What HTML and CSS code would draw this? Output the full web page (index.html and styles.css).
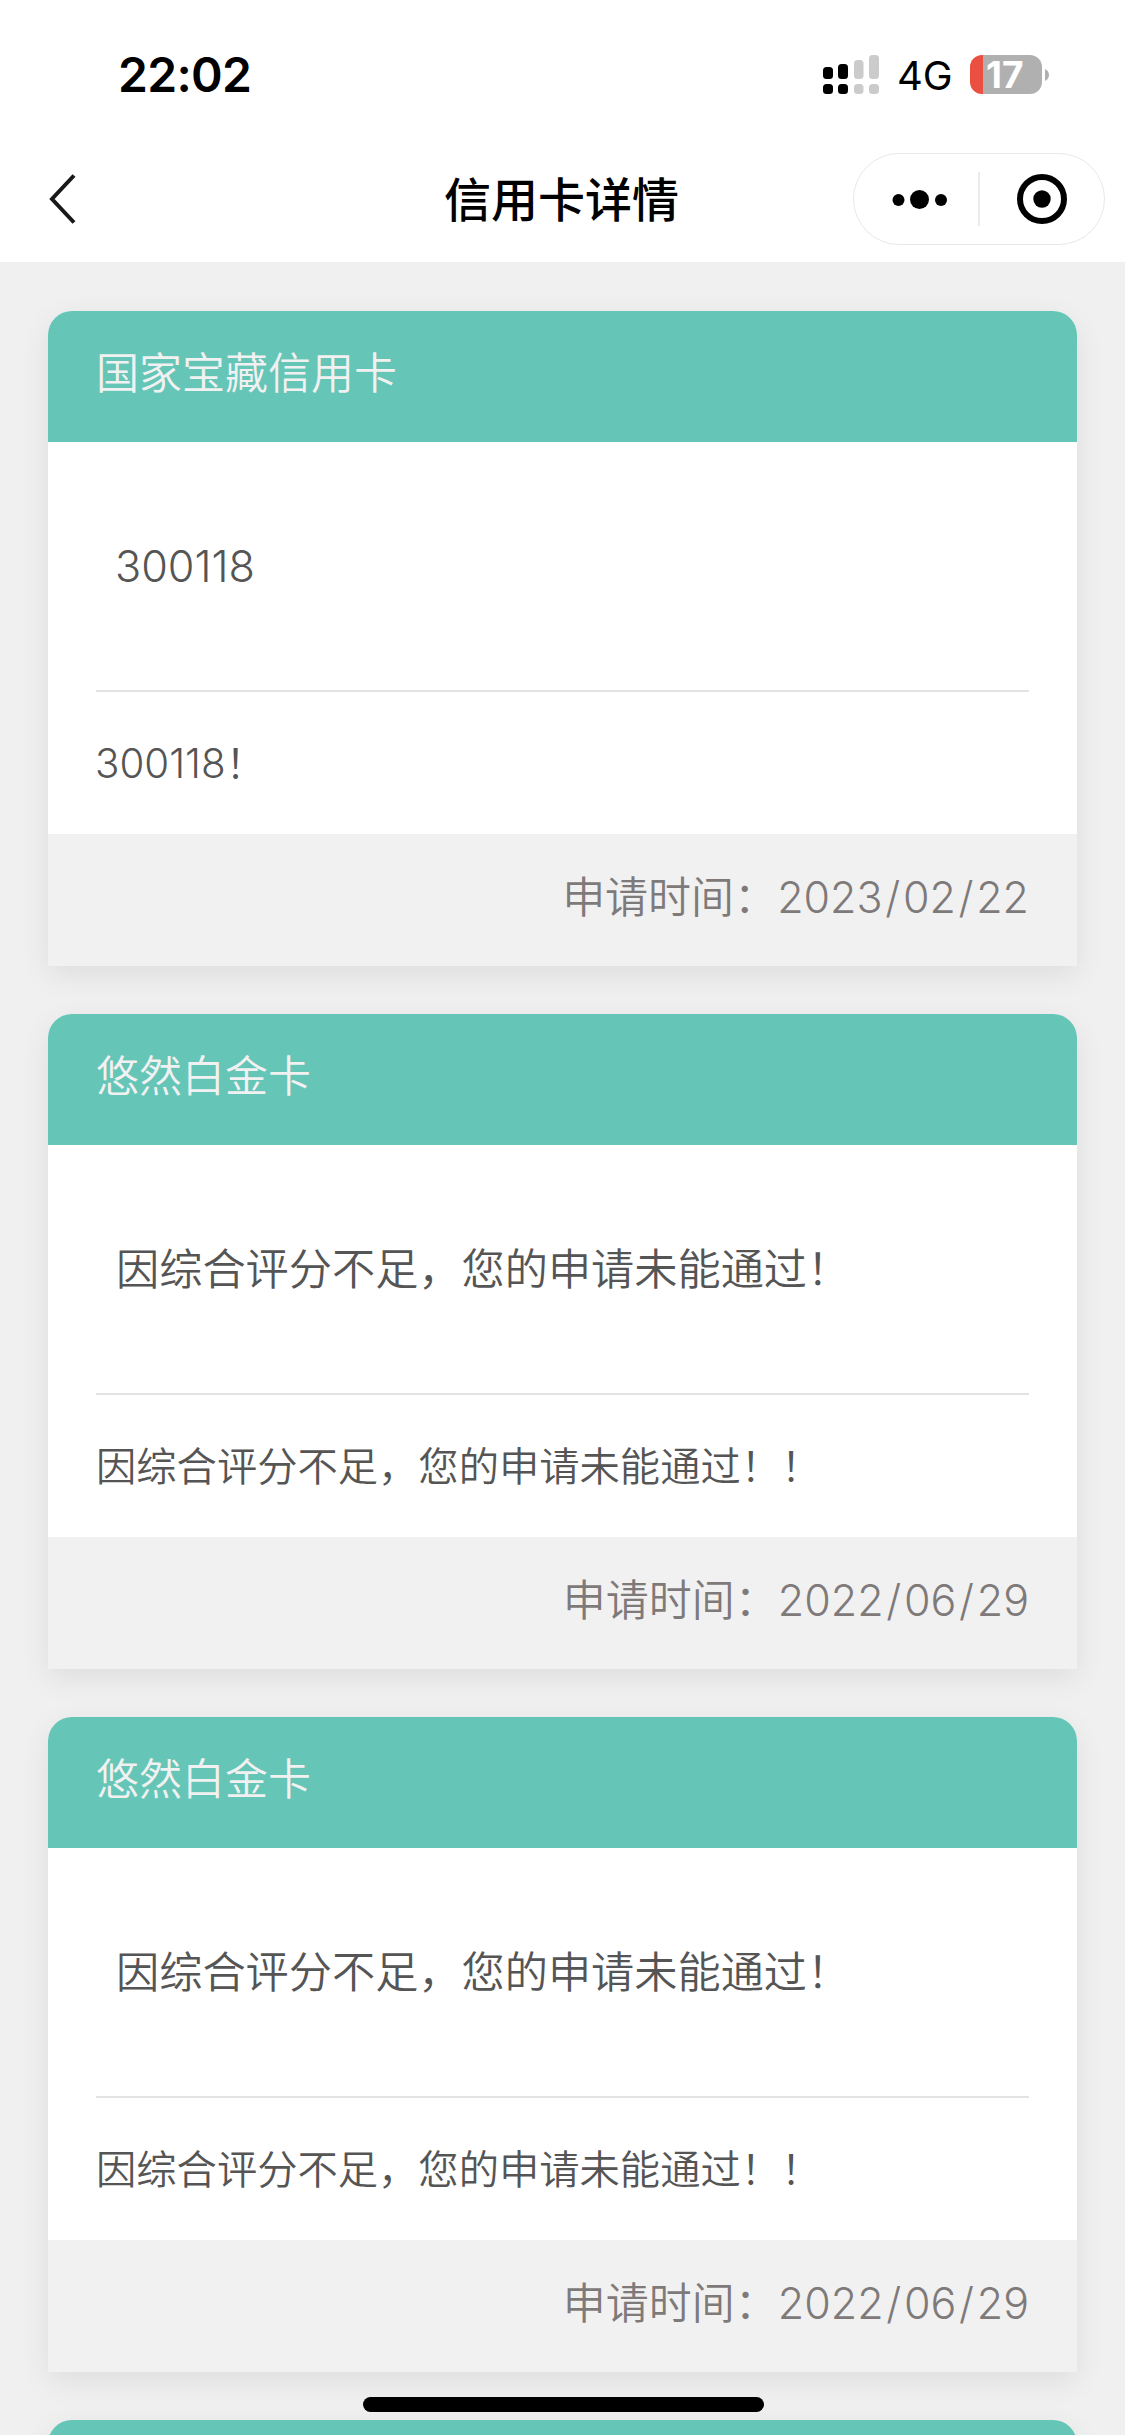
FILE: index.html
```html
<!DOCTYPE html>
<html lang="zh-CN">
<head>
<meta charset="utf-8">
<title>信用卡详情</title>
<link rel="stylesheet" href="styles.css">
</head>
<body>
<header class="top">
  <div class="status">
    <span class="time">22:02</span>
    <div class="status-right">
      <svg class="signal" width="56" height="39" viewBox="0 0 56 39">
        <g fill="#000"><rect x="0" y="12" width="10" height="12" rx="3.5"/><rect x="15" y="9" width="10" height="15" rx="3.5"/><rect x="0" y="29" width="10" height="10" rx="3.5"/><rect x="15" y="29" width="10" height="10" rx="3.5"/></g>
        <g fill="#cbcbcb"><rect x="31" y="5" width="9.5" height="19" rx="3.5"/><rect x="46" y="0" width="10" height="24" rx="3.5"/><rect x="31" y="29" width="9.5" height="10" rx="3.5"/><rect x="46" y="29" width="10" height="10" rx="3.5"/></g>
      </svg>
      <span class="network">4G</span>
      <div class="battery"><span class="level">17</span></div>
      <svg class="battery-tip" width="4" height="12" viewBox="0 0 4 12"><path d="M0 0Q4 2 4 6T0 12Z" fill="#b0b0b0"/></svg>
    </div>
  </div>
  <div class="nav">
    <svg class="back" width="30" height="52" viewBox="0 0 30 52"><path d="M27 2.5 5 26 27 49.500" fill="none" stroke="#191919" stroke-width="4"/></svg>
    <h1 class="title">信用卡详情</h1>
    <div class="capsule">
      <svg width="250" height="90" viewBox="0 0 250 90">
        <circle cx="44.500" cy="46" r="6"/><circle cx="65.500" cy="45.500" r="9.500"/><circle cx="87" cy="46" r="6"/>
        <path d="M125 18V72" stroke="#d8d8d8" stroke-width="1"/>
        <circle cx="188" cy="45" r="22" fill="none" stroke="#000" stroke-width="6"/><circle cx="188" cy="45" r="8.700"/>
      </svg>
    </div>
  </div>
</header>
<main class="list">
  <section class="card">
    <h2 class="card-name">国家宝藏信用卡</h2>
    <div class="card-body">
      <p class="result"><span class="num">300118</span></p>
      <p class="detail"><span class="num">300118</span>！</p>
    </div>
    <p class="card-foot">申请时间：<span class="date">2023<i>/</i>02<i>/</i>22</span></p>
  </section>
  <section class="card">
    <h2 class="card-name">悠然白金卡</h2>
    <div class="card-body">
      <p class="result">因综合评分不足，您的申请未能通过！</p>
      <p class="detail">因综合评分不足，您的申请未能通过！！</p>
    </div>
    <p class="card-foot">申请时间：<span class="date">2022<i>/</i>06<i>/</i>29</span></p>
  </section>
  <section class="card">
    <h2 class="card-name">悠然白金卡</h2>
    <div class="card-body">
      <p class="result">因综合评分不足，您的申请未能通过！</p>
      <p class="detail">因综合评分不足，您的申请未能通过！！</p>
    </div>
    <p class="card-foot">申请时间：<span class="date">2022<i>/</i>06<i>/</i>29</span></p>
  </section>
  <section class="card card-peek"></section>
</main>
<div class="home-indicator"></div>
</body>
</html>
```
FILE: styles.css
```css
* { box-sizing: border-box; margin: 0; padding: 0; }
body {
  width: 1125px;
  height: 2435px;
  overflow: hidden;
  background: #f0f0f0;
  font-family: Inter, "Noto Sans CJK SC", sans-serif;
  font-weight: 350;
  color: #555;
}
svg { display: block; flex: none; }
.top { height: 262px; background: #fff; color: #000; }
.status {
  height: 149px;
  padding: 0 76px 0 118px;
  display: flex;
  align-items: center;
  justify-content: space-between;
}
.time { font-size: 48px; font-weight: 600; letter-spacing: -0.7px; }
.status-right { display: flex; align-items: center; }
.network { width: 91px; padding: 2px 0 0 18px; font-size: 40px; font-weight: 400; line-height: 40px; }
.battery {
  width: 72px;
  height: 39px;
  border-radius: 12px;
  padding-left: 16px;
  background: linear-gradient(90deg, #ea4f3f 13px, #b0b0b0 13px);
}
.level { display: block; color: #fff; font-size: 37px; font-weight: 700; line-height: 40px; }
.battery-tip { margin-left: 3px; }
.nav {
  height: 100px;
  padding: 0 20px;
  display: grid;
  grid-template-columns: 1fr auto 1fr;
  align-items: center;
}
.back { margin-left: 27px; }
.title { font-size: 47px; font-weight: 500; line-height: 60px; padding: 1px 2px 0 0; }
.capsule {
  justify-self: end;
  width: 252px;
  height: 92px;
  border: 1px solid #e8e8e8;
  border-radius: 46px;
}
.list {
  height: 2173px;
  padding: 49px 48px 0;
  display: flex;
  flex-direction: column;
  gap: 48px;
  overflow: hidden;
}
.card {
  height: 655px;
  flex: none;
  border-radius: 24px 24px 0 0;
  background: #fff;
  box-shadow: 0 9px 30px rgba(0, 0, 0, .08);
  overflow: hidden;
}
.card-peek { height: 60px; background: #65c5b6; }
.card-name {
  height: 131px;
  padding: 0 48px;
  background: #65c5b6;
  color: #f1f1f1;
  font-size: 43px;
  font-weight: 350;
  line-height: 125px;
}
.card-body { height: 392px; padding: 0 48px; }
.result {
  height: 250px;
  padding-left: 20px;
  border-bottom: 2px solid #e3e3e3;
  font-size: 43.200px;
  line-height: 249px;
  white-space: nowrap;
}
.detail { font-size: 40.300px; line-height: 143px; white-space: nowrap; }
.num { margin-left: -1px; }
.card-foot {
  height: 132px;
  padding: 0 48px;
  background: #f1f1f1;
  color: #7f7a7a;
  font-size: 43px;
  line-height: 126px;
  text-align: right;
}
.date i { font-style: normal; margin: 0 2.700px; }
.home-indicator {
  position: absolute;
  left: 363px;
  top: 2397px;
  width: 401px;
  height: 15px;
  border-radius: 8px;
  background: #000;
}
```
